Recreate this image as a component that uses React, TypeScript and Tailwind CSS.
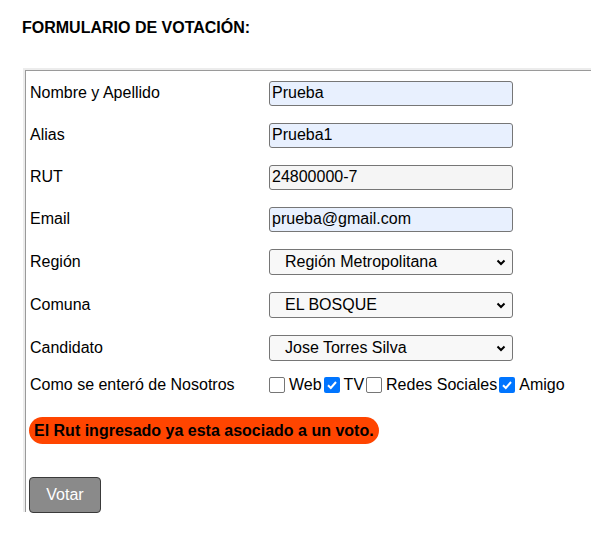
import React from "react";

const TEXT_FIELDS = [
  { label: "Nombre y Apellido", value: "Prueba", bg: "bg-[#e8f0fe]" },
  { label: "Alias", value: "Prueba1", bg: "bg-[#e8f0fe]" },
  { label: "RUT", value: "24800000-7", bg: "bg-[#f5f5f5]" },
  { label: "Email", value: "prueba@gmail.com", bg: "bg-[#e8f0fe]" },
];

const SELECT_FIELDS = [
  { label: "Región", value: "Región Metropolitana" },
  { label: "Comuna", value: "EL BOSQUE" },
  { label: "Candidato", value: "Jose Torres Silva" },
];

const SOURCES = [
  { name: "Web", checked: false },
  { name: "TV", checked: true },
  { name: "Redes Sociales", checked: false },
  { name: "Amigo", checked: true },
];

function Check({ checked }: { checked: boolean }) {
  if (checked) {
    return (
      <span className="flex h-[16px] w-[16px] shrink-0 items-center justify-center rounded-[2px] bg-[#0075ff]">
        <svg width="12" height="12" viewBox="0 0 12 12">
          <path d="M2 6.3 L4.8 9 L10 3" fill="none" stroke="white" strokeWidth="2" />
        </svg>
      </span>
    );
  }
  return <span className="h-[16px] w-[16px] shrink-0 rounded-[2px] border border-[#767676] bg-white" />;
}

export default function App() {
  return (
    <div className="min-h-[548px] bg-white font-['Liberation_Sans',Arial,sans-serif] text-[16px] text-black">
      <h4 className="pl-[22px] pt-[19px] text-[16px] font-bold leading-[18px]">FORMULARIO DE VOTACIÓN:</h4>

      {/* fieldset, groove border on top and left only */}
      <div className="ml-[23px] mt-[31px] h-[444px] border-l-2 border-t-2 border-[#ececec]">
        <div className="h-full border-l border-t border-[#9a9a9a] pl-[4px] pt-[1px]">
          <div className="grid grid-cols-[239px_1fr]">
            {TEXT_FIELDS.map((f) => (
              <React.Fragment key={f.label}>
                <div className="flex h-[42px] items-center">{f.label}</div>
                <div className="flex h-[42px] items-center">
                  <div
                    className={`flex h-[25px] w-[244px] items-center rounded-[3px] border border-[#767676] pl-[2px] leading-none ${f.bg}`}
                  >
                    {f.value}
                  </div>
                </div>
              </React.Fragment>
            ))}
            {SELECT_FIELDS.map((f) => (
              <React.Fragment key={f.label}>
                <div className="flex h-[43px] items-center">{f.label}</div>
                <div className="flex h-[43px] items-center">
                  <div className="flex h-[26px] w-[244px] items-center justify-between rounded-[3px] border border-[#767676] bg-[#f8f8f8] pl-[15px] pr-[5px] leading-none">
                    <span>{f.value}</span>
                    <svg width="12" height="12" viewBox="0 0 12 12">
                      <path d="M2.5 4.5 L6 8 L9.5 4.5" fill="none" stroke="black" strokeWidth="2" />
                    </svg>
                  </div>
                </div>
              </React.Fragment>
            ))}
            <div className="flex h-[32px] items-center">Como se enteró de Nosotros</div>
            <div className="flex h-[32px] items-center">
              {SOURCES.map((s) => (
                <span key={s.name} className="mr-[2px] flex items-center gap-[4px]">
                  <Check checked={s.checked} />
                  <span>{s.name}</span>
                </span>
              ))}
            </div>
          </div>

          <div className="-ml-[1px] mt-[16px]">
            <span className="inline-block h-[27px] rounded-full bg-[#ff4500] px-[5px] text-[16px] font-bold leading-[27px]">
              El Rut ingresado ya esta asociado a un voto.
            </span>
          </div>

          <button className="-ml-[1px] mt-[33px] h-[36px] w-[72px] rounded-[4px] border border-[#3a3a3a] bg-[#8a8a8a] text-[16px] text-white">
            Votar
          </button>
        </div>
      </div>
    </div>
  );
}
